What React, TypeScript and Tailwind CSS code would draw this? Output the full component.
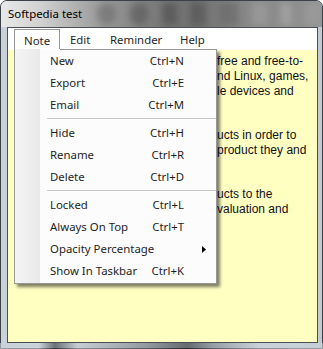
import React from 'react';

type Entry = { label: string; keys?: string; sub?: boolean } | 'sep';

const menu: Entry[] = [
  { label: 'New', keys: 'Ctrl+N' },
  { label: 'Export', keys: 'Ctrl+E' },
  { label: 'Email', keys: 'Ctrl+M' },
  'sep',
  { label: 'Hide', keys: 'Ctrl+H' },
  { label: 'Rename', keys: 'Ctrl+R' },
  { label: 'Delete', keys: 'Ctrl+D' },
  'sep',
  { label: 'Locked', keys: 'Ctrl+L' },
  { label: 'Always On Top', keys: 'Ctrl+T' },
  { label: 'Opacity Percentage', sub: true },
  { label: 'Show In Taskbar', keys: 'Ctrl+K' },
];

// only the part of the note that shows to the right of the dropdown
const lines = [
  'free and free-to-',
  'nd Linux, games,',
  'le devices and',
  '',
  '',
  'ucts in order to',
  'product they and',
  '',
  '',
  'ucts to the',
  'valuation and',
];

const ui = "font-['Segoe_UI','Noto_Sans',sans-serif]";

const App = () => {
  return (
    <div className="relative w-[323px] h-[349px] overflow-hidden bg-white">
      {/* window frame */}
      <div className="flex flex-col w-[323px] h-[349px] rounded-t-[7px] border border-[#3b4147] bg-[linear-gradient(to_right,#c9d2d8,#d3dbe0_50%,#c2cbd1)]">
        <div className="relative h-[26px] rounded-t-[6px] overflow-hidden bg-[linear-gradient(to_right,#e9e9e9_0%,#d2d2d2_12%,#a3a3a3_28%,#7e7e7e_45%,#6f6f6f_60%,#8a8a8a_78%,#929292_100%)]">
          {/* blurred glass behind the caption */}
          <div className="absolute inset-0 flex items-center gap-[14px] pl-[96px] blur-[3px]">
            <div className="w-[20px] h-[22px] rounded-full bg-[#555]/40" />
            <div className="w-[18px] h-[22px] rounded-full bg-[#4a4a4a]/45" />
            <div className="w-[16px] h-[22px] bg-[#3e3e3e]/45" />
            <div className="w-[16px] h-[22px] bg-[#444]/40" />
            <div className="w-[18px] h-[22px] bg-[#555]/35" />
            <div className="w-[16px] h-[22px] bg-[#aaa]/40" />
            <div className="w-[10px] h-[22px] bg-[#bbb]/40" />
            <div className="w-[18px] h-[22px] bg-[#aaa]/35" />
          </div>
          <div className={`relative pl-[7px] pt-[5px] text-[11.4px] leading-[16px] text-black ${ui}`}>Softpedia test</div>
        </div>

        <div className="flex-1 flex flex-col pl-[6px] pr-[4px] pb-[5px] min-h-0">
          <div className="flex-1 flex flex-col border border-[#4a5056] min-h-0">
            {/* menubar */}
            <div className={`flex h-[22px] pt-[1px] pl-[6px] bg-white text-[11.4px] text-[#1e1e1e] ${ui}`}>
              <div className="w-[46px] h-[21px] border-t border-x border-[#979797] pl-[9px] leading-[21px]">Note</div>
              <div className="w-[40px] pl-[10px] leading-[21px]">Edit</div>
              <div className="w-[70px] pl-[10px] leading-[21px]">Reminder</div>
              <div className="pl-[10px] leading-[21px]">Help</div>
            </div>
            {/* note body */}
            <div className="flex-1 bg-[#ffffc2] pt-[4px] pl-[209px] text-[12px] leading-[14.8px] text-[#101020] font-['Liberation_Sans',Arial,sans-serif]">
              {lines.map((t, i) => (
                <div key={i} className="h-[14.8px] whitespace-nowrap">{t}</div>
              ))}
            </div>
          </div>
        </div>
        <div className="absolute left-0 bottom-0 w-[323px] h-[6px] bg-[linear-gradient(to_right,#c9d2d8_0%,#c9d2d8_12%,#2a2f33_17%,#c0c8ce_24%,#6a7278_45%,#1e2226_58%,#707a80_66%,#c9d2d8_80%,#c9d2d8_100%)] opacity-60 pointer-events-none" />
      </div>

      {/* open Note dropdown */}
      <div className={`absolute left-[14px] top-[49px] w-[203px] h-[235px] bg-[#fcfcfc] border-x border-b border-[#979797] shadow-[3px_3px_3px_rgba(0,0,0,0.5)] text-[11.4px] text-[#1e1e1e] ${ui}`}>
        <div className="absolute left-[45px] right-0 top-0 h-px bg-[#979797]" />
        <div className="absolute left-0 top-0 bottom-0 w-[25px] bg-[linear-gradient(to_right,#f4f4f4,#e9e9e9)]" />
        <div className="relative pt-[1px]">
          {menu.map((m, i) =>
            m === 'sep' ? (
              <div key={i} className="h-[6px] pl-[32px] pt-[2px]">
                <div className="h-px bg-[#c5c5c5]" />
                <div className="h-px bg-white" />
              </div>
            ) : (
              <div key={i} className="flex items-center h-[22px] pl-[35px] pr-[32px]">
                <span className="flex-1">{m.label}</span>
                {m.keys && <span>{m.keys}</span>}
                {m.sub && (
                  <svg className="absolute right-[10px]" width="4" height="7" viewBox="0 0 4 7">
                    <path d="M0 0 L4 3.5 L0 7 Z" fill="#000" />
                  </svg>
                )}
              </div>
            )
          )}
        </div>
      </div>
    </div>
  );
};

export default App;
